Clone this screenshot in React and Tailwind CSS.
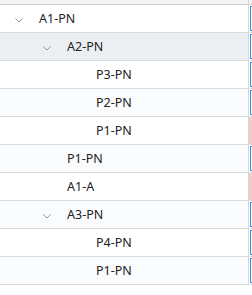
import React from 'react'

const rows = [
  { label: 'A1-PN', level: 0, open: true, mark: 'blue' },
  { label: 'A2-PN', level: 1, open: true, mark: 'blue', selected: true },
  { label: 'P3-PN', level: 2, mark: 'blue' },
  { label: 'P2-PN', level: 2, mark: 'blue' },
  { label: 'P1-PN', level: 2, mark: 'pink' },
  { label: 'P1-PN', level: 1, mark: 'blue' },
  { label: 'A1-A', level: 1, mark: 'pink' },
  { label: 'A3-PN', level: 1, open: true, mark: 'blue' },
  { label: 'P4-PN', level: 2, mark: 'blue' },
  { label: 'P1-PN', level: 2, mark: 'blue' }
]

const indent = ['pl-[11px]', 'pl-[39px]', 'pl-[68px]']

function Chevron() {
  return (
    <svg width="16" height="16" viewBox="0 0 16 16" className="shrink-0">
      <polyline points="4.5,7.5 8,11 11.5,7.5" fill="none" stroke="#8796a8" strokeWidth="1" />
    </svg>
  )
}

function Row({ row, index }) {
  const bg = row.selected ? 'bg-[#eceff1]' : index % 2 === 1 ? 'bg-[#fafbfd]' : 'bg-white'
  const hasChildren = row.open !== undefined
  return (
    <div className="flex h-[28px] border-b border-[#dadde0]">
      <div className={`w-[249px] shrink-0 border-r border-[#d6d6d6] flex items-center ${bg} ${indent[row.level]}`}>
        {hasChildren ? <Chevron /> : <span className="w-[16px] shrink-0" />}
        <span className="ml-[12px] pt-[2px] text-[12.5px] text-[#222] leading-none">{row.label}</span>
      </div>
      {row.mark === 'pink' ? (
        <div className="w-[10px] shrink-0 bg-[#f7cac6]" />
      ) : (
        <div className="w-[10px] shrink-0 p-[1px] bg-white">
          <div className="h-full border border-[#3d8fe3]" />
        </div>
      )}
    </div>
  )
}

export default function App() {
  return (
    <div className="w-[252px] h-[295px] overflow-hidden bg-white" style={{ fontFamily: '"Noto Sans", "Open Sans", sans-serif' }}>
      <div className="flex h-[5px] border-b border-[#d2d2d2] bg-[#f3f3f3]">
        <div className="w-[249px] shrink-0 border-r border-[#d6d6d6]" />
      </div>
      {rows.map((row, i) => (
        <Row key={i} row={row} index={i} />
      ))}
    </div>
  )
}
